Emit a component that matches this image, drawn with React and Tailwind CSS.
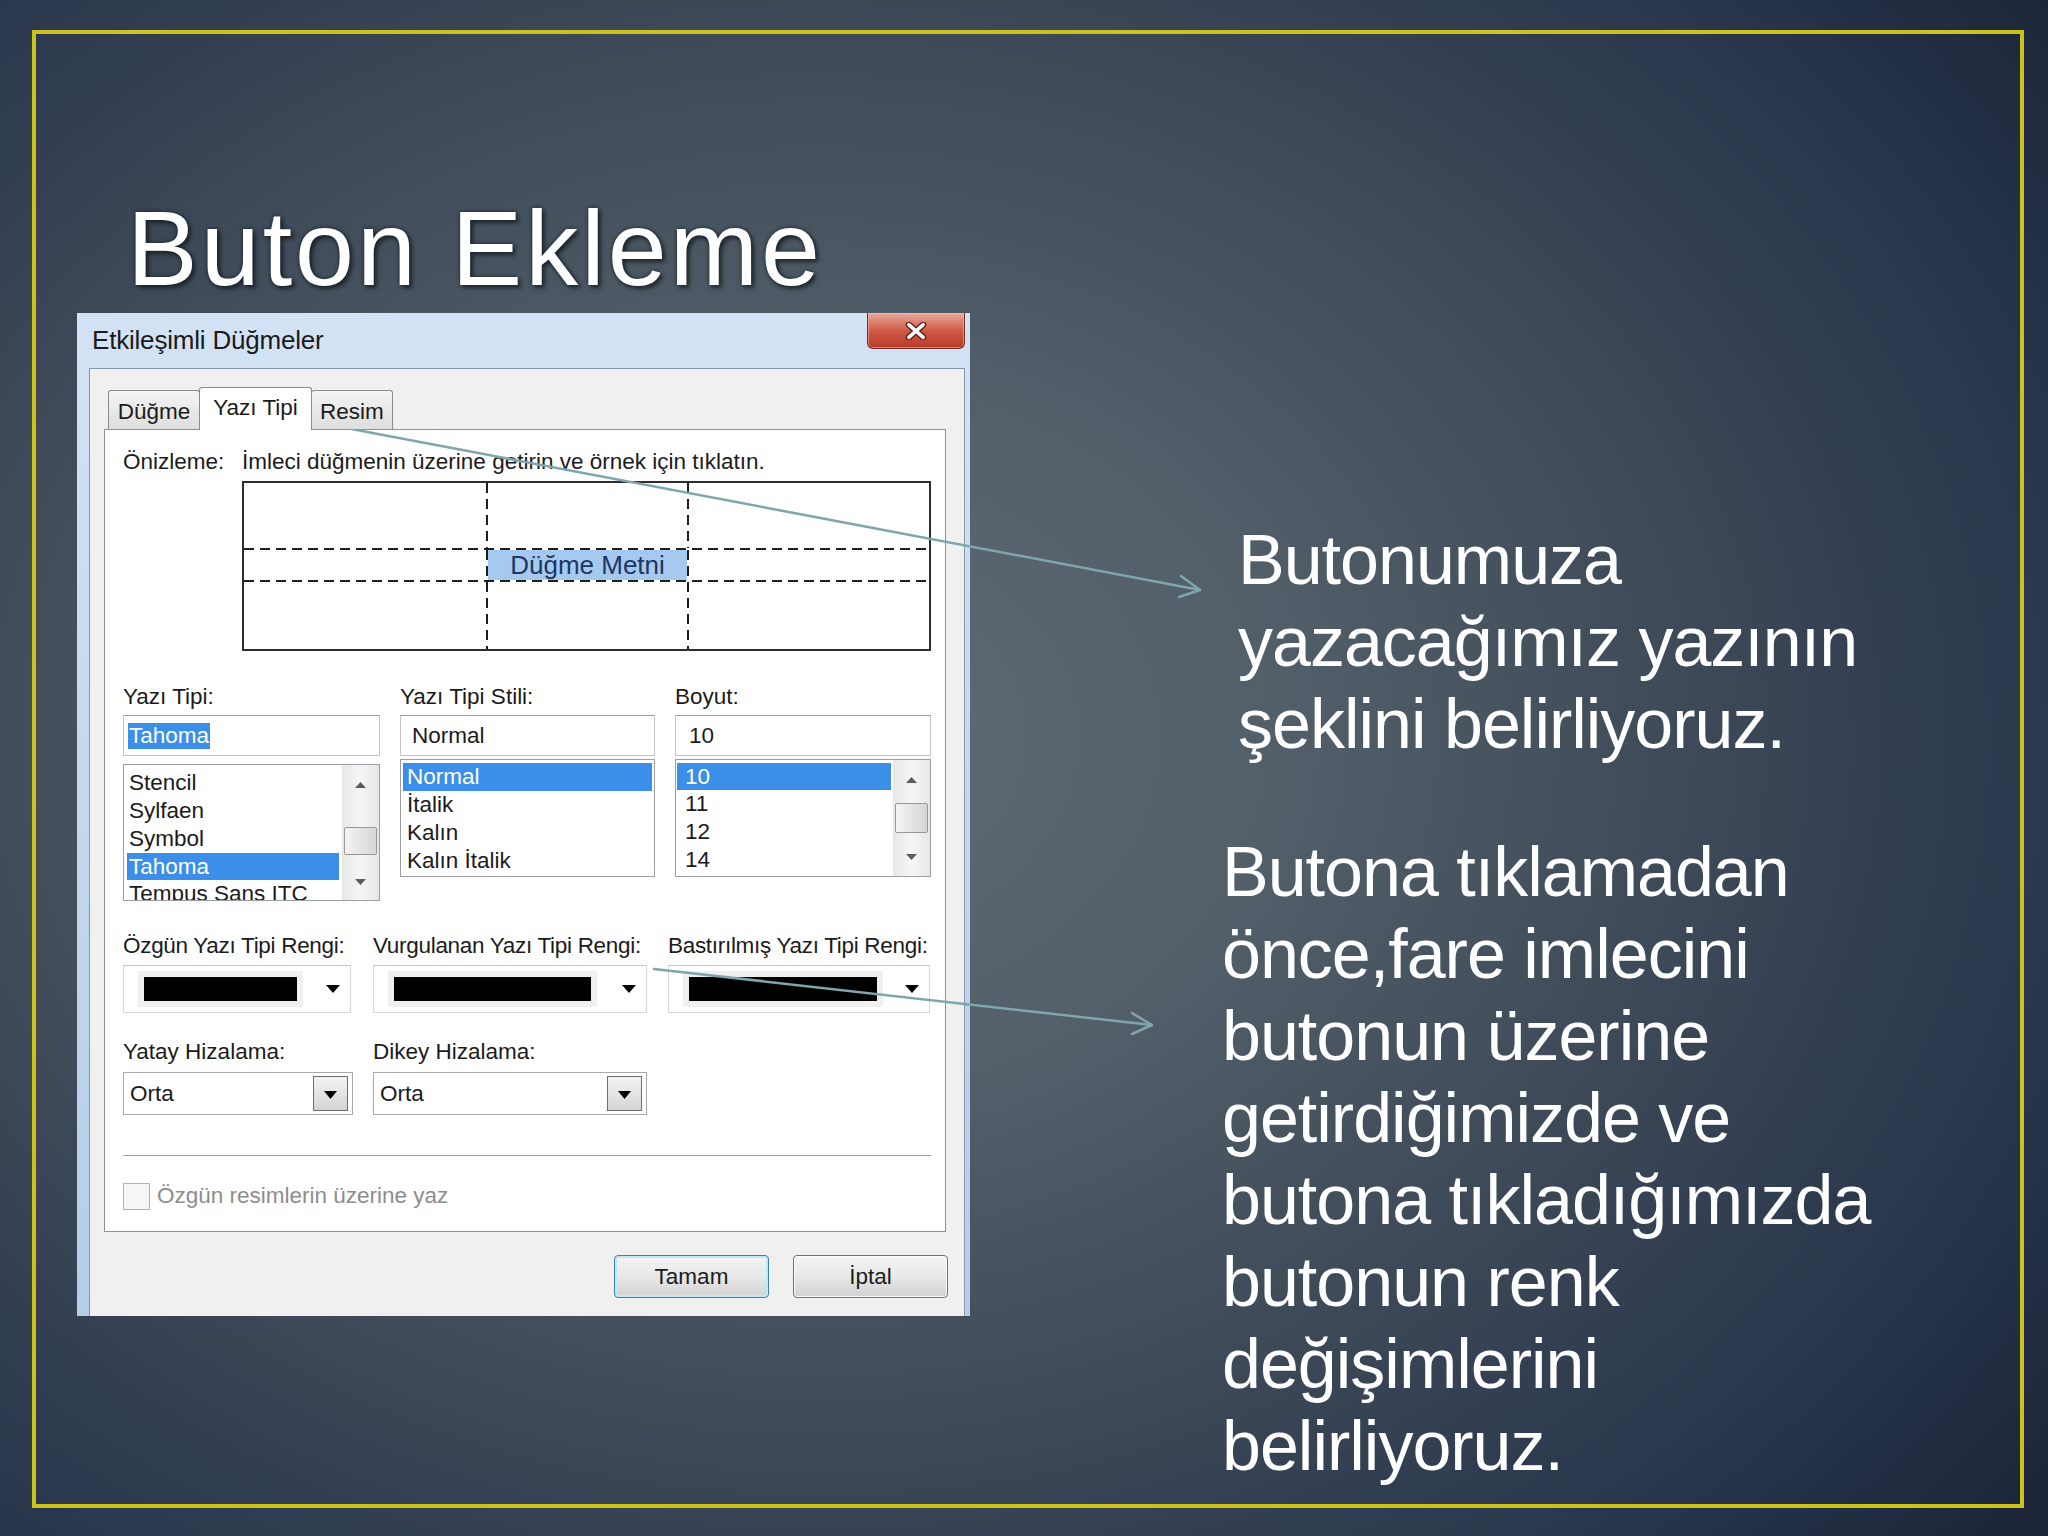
import React from 'react';

function Tri({ up = false, w = 12, h = 7, className = '' }) {
  return (
    <svg width={w} height={h} viewBox="0 0 12 7" preserveAspectRatio="none" className={className}>
      <path d={up ? 'M0 7 L6 0 L12 7 Z' : 'M0 0 L12 0 L6 7 Z'} fill="currentColor" />
    </svg>
  );
}

function ScrollBar({ upH, gap, thumbH, downH }) {
  return (
    <div className="w-[37px] h-full flex flex-col bg-gradient-to-r from-[#e6e6e6] via-[#f6f6f6] to-[#e6e6e6]">
      <div style={{ height: upH }} className="flex items-center justify-center text-[#5c5c5c]">
        <Tri up w={11} h={6} />
      </div>
      <div style={{ height: gap }} />
      <div
        style={{ height: thumbH }}
        className="mx-[2px] rounded-[2px] border border-[#989898] bg-gradient-to-r from-[#f4f4f4] to-[#d6d6d6]"
      />
      <div className="flex-1" />
      <div style={{ height: downH }} className="flex items-center justify-center text-[#5c5c5c]">
        <Tri w={11} h={6} />
      </div>
    </div>
  );
}

function VDash() {
  return <div className="w-[2px] h-full bg-[repeating-linear-gradient(180deg,#1e1e1e_0_10px,transparent_10px_16px)]" />;
}

function HDash() {
  return <div className="h-[2px] w-full bg-[repeating-linear-gradient(90deg,#1e1e1e_0_10px,transparent_10px_16px)]" />;
}

function ColorPicker({ width, swatch }) {
  return (
    <div style={{ width }} className="mt-[5px] h-[48px] border border-[#d8d8d8] border-t-[#c4c4c4] bg-white flex items-center pl-[14px]">
      <div className="p-[6px] bg-[#f0f0f0]">
        <div style={{ width: swatch }} className="h-[24px] bg-black" />
      </div>
      <div className="ml-auto mr-[10px] text-black">
        <Tri w={14} h={8} />
      </div>
    </div>
  );
}

function Combo({ width }) {
  return (
    <div style={{ width }} className="mt-[6px] h-[43px] border border-[#a9a9a9] bg-white flex items-center pl-[6px]">
      <span>Orta</span>
      <div className="ml-auto mr-[4px] w-[35px] h-[35px] border border-[#6f6f6f] bg-gradient-to-b from-[#f3f3f3] to-[#d5d5d5] flex items-center justify-center pt-[3px] text-black">
        <Tri w={13} h={8} />
      </div>
    </div>
  );
}

function Dialog() {
  return (
    <div className="ml-[41px] w-[893px] h-[1003px] flex flex-col bg-gradient-to-b from-[#d3e3f5] via-[#c3d8ef] to-[#b5cde8] text-[#1b1b1b]">
      <div className="h-[55px] shrink-0 flex items-center pl-[15px]">
        <span className="text-[26px] tracking-[-0.2px]">Etkileşimli Düğmeler</span>
        <div className="ml-auto mr-[5px] self-start w-[98px] h-[36px] rounded-b-[6px] border border-t-0 border-[#6e2e24] bg-gradient-to-b from-[#e9a89c] via-[#cf5b47] to-[#b83a27] flex items-center justify-center shadow-[inset_0_0_0_1px_rgba(255,200,190,0.5)]">
          <svg width="24" height="18" viewBox="0 0 26 20">
            <path d="M5 3 L21 17 M21 3 L5 17" stroke="#5a2018" strokeWidth="7" strokeLinecap="round" />
            <path d="M5 3 L21 17 M21 3 L5 17" stroke="#ffffff" strokeWidth="4" strokeLinecap="round" />
          </svg>
        </div>
      </div>

      <div className="flex-1 ml-[12px] mr-[5px] border border-b-0 border-[#8597ad] bg-[#f0f0f0] flex flex-col pt-[18px] text-[22.5px]">
        {/* tabs */}
        <div className="ml-[18px] h-[42px] flex items-end relative z-10">
          <div className="w-[92px] h-[39px] border border-b-0 border-[#898c95] rounded-t-[3px] bg-gradient-to-b from-[#f4f4f4] to-[#dedede] flex items-center justify-center pt-[3px]">
            Düğme
          </div>
          <div className="-ml-px w-[113px] h-[43px] -mb-px border border-b-0 border-[#898c95] rounded-t-[3px] bg-white flex items-center justify-center pb-[3px]">
            Yazı Tipi
          </div>
          <div className="-ml-px w-[82px] h-[39px] border border-b-0 border-[#898c95] rounded-t-[3px] bg-gradient-to-b from-[#f4f4f4] to-[#dedede] flex items-center justify-center pt-[3px]">
            Resim
          </div>
        </div>

        {/* panel */}
        <div className="ml-[14px] w-[842px] h-[803px] shrink-0 border border-[#8e9196] bg-white pl-[18px] leading-[28px]">
          <div className="mt-[18px] flex h-[28px] items-center whitespace-nowrap">
            <span className="w-[119px]">Önizleme:</span>
            <span>İmleci düğmenin üzerine getirin ve örnek için tıklatın.</span>
          </div>

          <div className="mt-[5px] ml-[119px] w-[689px] h-[170px] border-2 border-[#2d2d2d] flex flex-col">
            <div className="h-[65px] flex">
              <div className="w-[242px]" />
              <VDash />
              <div className="w-[199px]" />
              <VDash />
              <div className="flex-1" />
            </div>
            <HDash />
            <div className="h-[30px] flex">
              <div className="w-[242px]" />
              <VDash />
              <div className="w-[199px] bg-[#a6c9ef] flex items-center justify-center text-[26px] text-[#1c3764]">
                Düğme Metni
              </div>
              <VDash />
              <div className="flex-1" />
            </div>
            <HDash />
            <div className="flex-1 flex">
              <div className="w-[242px]" />
              <VDash />
              <div className="w-[199px]" />
              <VDash />
              <div className="flex-1" />
            </div>
          </div>

          {/* font / style / size */}
          <div className="mt-[32px] flex gap-[20px] items-start">
            <div className="w-[257px]">
              <div className="h-[28px]">Yazı Tipi:</div>
              <div className="mt-[4px] h-[41px] border border-[#c4c4c4] border-t-[#9a9a9a] flex items-center pl-[4px]">
                <span className="bg-[#3b8fe8] text-white leading-[26px] px-px">Tahoma</span>
              </div>
              <div className="mt-[8px] h-[137px] border border-[#9b9ea5] flex">
                <div className="flex-1 pl-[3px] pr-[3px] pt-[4px] overflow-hidden">
                  <div className="pl-[2px] h-[28px]">Stencil</div>
                  <div className="pl-[2px] h-[28px]">Sylfaen</div>
                  <div className="pl-[2px] h-[28px]">Symbol</div>
                  <div className="pl-[2px] h-[27px] leading-[27px] bg-[#3b8fe8] text-white">Tahoma</div>
                  <div className="pl-[2px] h-[28px]">Tempus Sans ITC</div>
                </div>
                <ScrollBar upH={40} gap={22} thumbH={28} downH={37} />
              </div>
            </div>

            <div className="w-[255px]">
              <div className="h-[28px]">Yazı Tipi Stili:</div>
              <div className="mt-[4px] h-[41px] border border-[#c4c4c4] border-t-[#9a9a9a] flex items-center pl-[11px]">
                Normal
              </div>
              <div className="mt-[3px] h-[118px] border border-[#9b9ea5] pt-[3px] px-[2px]">
                <div className="pl-[4px] h-[28px] bg-[#3b8fe8] text-white">Normal</div>
                <div className="pl-[4px] h-[28px]">İtalik</div>
                <div className="pl-[4px] h-[28px]">Kalın</div>
                <div className="pl-[4px] h-[28px]">Kalın İtalik</div>
              </div>
            </div>

            <div className="w-[256px]">
              <div className="h-[28px]">Boyut:</div>
              <div className="mt-[4px] h-[41px] border border-[#c4c4c4] border-t-[#9a9a9a] flex items-center pl-[13px]">
                10
              </div>
              <div className="mt-[3px] h-[118px] border border-[#9b9ea5] flex">
                <div className="flex-1 pt-[3px] pl-px pr-[2px]">
                  <div className="pl-[8px] h-[27px] leading-[27px] bg-[#3b8fe8] text-white">10</div>
                  <div className="pl-[8px] h-[28px]">11</div>
                  <div className="pl-[8px] h-[28px]">12</div>
                  <div className="pl-[8px] h-[28px]">14</div>
                </div>
                <ScrollBar upH={40} gap={3} thumbH={30} downH={38} />
              </div>
            </div>
          </div>

          {/* colours */}
          <div className="mt-[31px] flex items-start whitespace-nowrap tracking-[-0.3px]">
            <div className="w-[228px]">
              <div className="h-[28px]">Özgün Yazı Tipi Rengi:</div>
              <ColorPicker width={228} swatch={153} />
            </div>
            <div className="ml-[22px] w-[274px]">
              <div className="h-[28px]">Vurgulanan Yazı Tipi Rengi:</div>
              <ColorPicker width={274} swatch={197} />
            </div>
            <div className="ml-[21px] w-[262px]">
              <div className="h-[28px]">Bastırılmış Yazı Tipi Rengi:</div>
              <ColorPicker width={262} swatch={188} />
            </div>
          </div>

          {/* alignment */}
          <div className="mt-[25px] flex items-start whitespace-nowrap">
            <div className="w-[230px]">
              <div className="h-[28px]">Yatay Hizalama:</div>
              <Combo width={230} />
            </div>
            <div className="ml-[20px] w-[274px]">
              <div className="h-[28px]">Dikey Hizalama:</div>
              <Combo width={274} />
            </div>
          </div>

          <div className="mt-[40px] w-[808px] h-px bg-[#a3a3a3]" />

          <div className="mt-[26px] flex items-center">
            <div className="w-[27px] h-[27px] border border-[#b3b3b3] bg-[#f6f6f6]" />
            <span className="ml-[7px] text-[#8d8d8d]">Özgün resimlerin üzerine yaz</span>
          </div>
        </div>

        {/* buttons */}
        <div className="mt-[23px] flex justify-end gap-[24px] pr-[16px]">
          <div className="w-[155px] h-[43px] rounded-[4px] border border-[#3c7fb1] shadow-[inset_0_0_0_2px_#bfe8f7] bg-gradient-to-b from-[#f4f4f4] via-[#e8e8e8] to-[#d2d2d2] flex items-center justify-center">
            Tamam
          </div>
          <div className="w-[155px] h-[43px] rounded-[4px] border border-[#707070] shadow-[inset_0_0_0_1px_#fbfbfb] bg-gradient-to-b from-[#f4f4f4] via-[#e8e8e8] to-[#d2d2d2] flex items-center justify-center">
            İptal
          </div>
        </div>
      </div>
    </div>
  );
}

export default function App() {
  return (
    <div className="relative w-[2048px] h-[1536px] overflow-hidden pt-[30px] pl-[32px] font-['Liberation_Sans',Arial,sans-serif] bg-[radial-gradient(ellipse_75%_80%_at_40%_48%,#606c75_0%,#525e68_30%,#3b4756_60%,#26334a_85%,#1c2638_100%)]">
      <div className="w-[1992px] h-[1478px] border-4 border-[#cbc31c] flex flex-col">
        <div className="mt-[161px] ml-[91px] h-[106px] text-[106px] leading-none tracking-[3px] text-white whitespace-nowrap [text-shadow:0_0_4px_rgba(25,35,45,0.95),3px_3px_4px_rgba(0,0,0,0.5)]">
          Buton Ekleme
        </div>
        <div className="mt-[12px] flex items-start">
          <Dialog />
          <div className="ml-[268px] mt-[206px] text-[70px] leading-[82px] tracking-[-1px] text-white whitespace-nowrap">
            <div>Butonumuza</div>
            <div>yazacağımız yazının</div>
            <div>şeklini belirliyoruz.</div>
            <div className="mt-[66px] -ml-[16px]">
              <div>Butona tıklamadan</div>
              <div>önce,fare imlecini</div>
              <div>butonun üzerine</div>
              <div>getirdiğimizde ve</div>
              <div>butona tıkladığımızda</div>
              <div>butonun renk</div>
              <div>değişimlerini</div>
              <div>belirliyoruz.</div>
            </div>
          </div>
        </div>
      </div>

      <svg className="absolute inset-0 pointer-events-none" width="2048" height="1536" viewBox="0 0 2048 1536">
        <g stroke="#7fa6ad" strokeWidth="2.5" fill="none" strokeLinecap="round" strokeLinejoin="round">
          <path d="M267 413 L1200 590" />
          <path d="M1181 576 L1200 590 L1179 597" />
          <path d="M654 969 L1152 1025" />
          <path d="M1132 1013 L1152 1025 L1132 1034" />
        </g>
      </svg>
    </div>
  );
}
